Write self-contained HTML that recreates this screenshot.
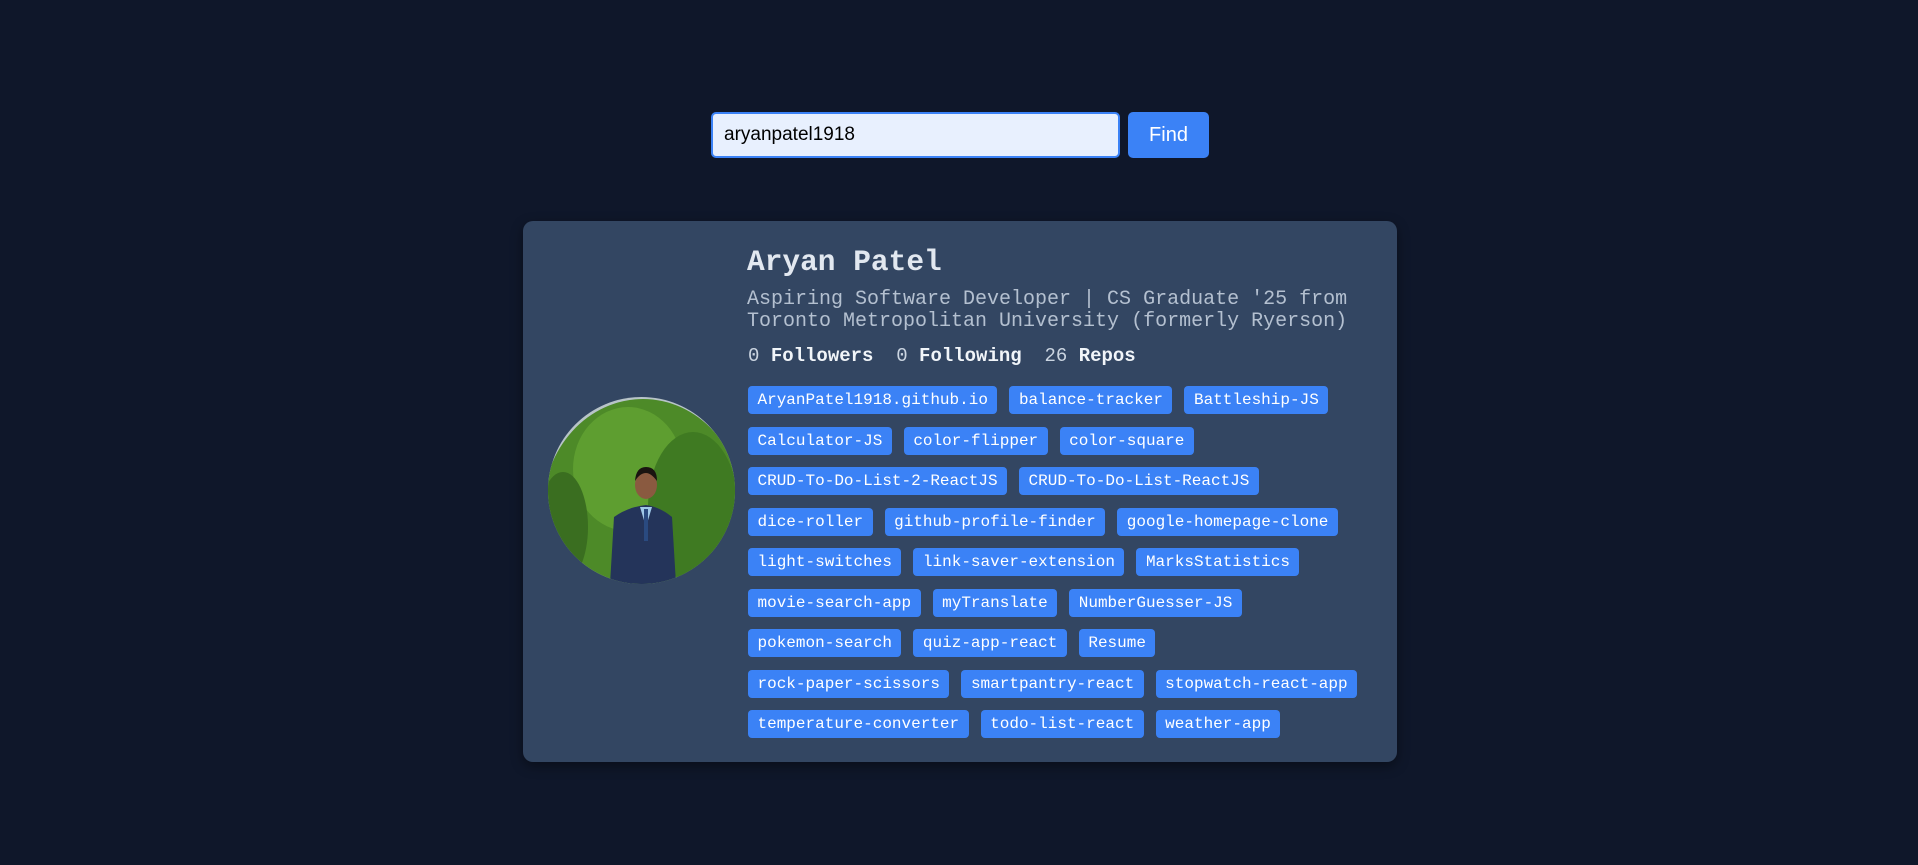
<!DOCTYPE html>
<html><head><meta charset="utf-8"><style>
*{box-sizing:border-box;margin:0;padding:0}
body{width:1918px;height:865px;background:#0f172a;position:relative;overflow:hidden;font-family:"Liberation Mono",monospace}
.inp{position:absolute;left:711px;top:112px;width:409px;height:46px;background:#e8f0fe;border:2px solid #3b82f6;border-radius:5px;font:19px "Liberation Sans",sans-serif;color:#000;padding:0 0 0 11px;line-height:42px}
.btn{position:absolute;left:1128px;top:112px;width:81px;height:46px;background:#3b82f6;border-radius:5px;color:#fff;font:20px "Liberation Sans",sans-serif;text-align:center;line-height:46px}
.card{position:absolute;left:523px;top:221px;width:874px;height:541px;background:#334662;border-radius:10px;box-shadow:0 4px 12px rgba(0,0,0,.4)}
.av{position:absolute;left:548px;top:397px;width:187px;height:187px;border-radius:50%;overflow:hidden}
.name{position:absolute;left:747px;top:245px;font-size:29.5px;font-weight:bold;color:#e2e8f0}
.bio{position:absolute;left:747px;top:289px;font-size:20px;line-height:22px;color:#b4c0d0;width:660px}
.stats{position:absolute;left:748px;top:345px;font-size:19px;color:#cbd5e1}
.stats b{color:#f1f5f9}
.tags{position:absolute;left:748px;top:386px;width:618px;display:flex;flex-wrap:wrap;gap:12.5px 12px}
.tags span{background:#3b82f6;color:#fff;font-size:16px;height:28px;line-height:28px;padding:0 9.5px;border-radius:4px;white-space:nowrap}
</style></head><body>
<div class="inp">aryanpatel1918</div>
<div class="btn">Find</div>
<div class="card"></div>
<div class="av">
<svg width="187" height="187" viewBox="0 0 187 187">
<rect width="187" height="187" fill="#b8c4c8"/>
<ellipse cx="95" cy="112" rx="100" ry="110" fill="#4d8a28"/>
<ellipse cx="80" cy="72" rx="55" ry="62" fill="#5e9e30"/>
<ellipse cx="145" cy="110" rx="45" ry="75" fill="#3f7a22"/>
<ellipse cx="15" cy="130" rx="25" ry="55" fill="#3a6e20"/>
<path d="M62 187 L66 120 Q80 110 98 108 Q112 110 124 120 L128 187Z" fill="#24345a"/>
<path d="M92 110 L98 130 L104 110Z" fill="#9fc8e8"/>
<rect x="96" y="112" width="4" height="32" fill="#2a4a80"/>
<ellipse cx="98" cy="88" rx="11" ry="14" fill="#8a5a40"/>
<path d="M87 84 Q88 70 98 70 Q109 70 109 84 Q103 76 98 76 Q92 76 87 84Z" fill="#1a1410"/>
</svg></div>
<div class="name">Aryan Patel</div>
<div class="bio">Aspiring Software Developer | CS Graduate '25 from Toronto Metropolitan University (formerly Ryerson)</div>
<div class="stats">0 <b>Followers</b>&nbsp;&nbsp;0 <b>Following</b>&nbsp;&nbsp;26 <b>Repos</b></div>
<div class="tags">
<span>AryanPatel1918.github.io</span><span>balance-tracker</span><span>Battleship-JS</span>
<span>Calculator-JS</span><span>color-flipper</span><span>color-square</span>
<span>CRUD-To-Do-List-2-ReactJS</span><span>CRUD-To-Do-List-ReactJS</span>
<span>dice-roller</span><span>github-profile-finder</span><span>google-homepage-clone</span>
<span>light-switches</span><span>link-saver-extension</span><span>MarksStatistics</span>
<span>movie-search-app</span><span>myTranslate</span><span>NumberGuesser-JS</span>
<span>pokemon-search</span><span>quiz-app-react</span><span>Resume</span>
<span>rock-paper-scissors</span><span>smartpantry-react</span><span>stopwatch-react-app</span>
<span>temperature-converter</span><span>todo-list-react</span><span>weather-app</span>
</div>
</body></html>
